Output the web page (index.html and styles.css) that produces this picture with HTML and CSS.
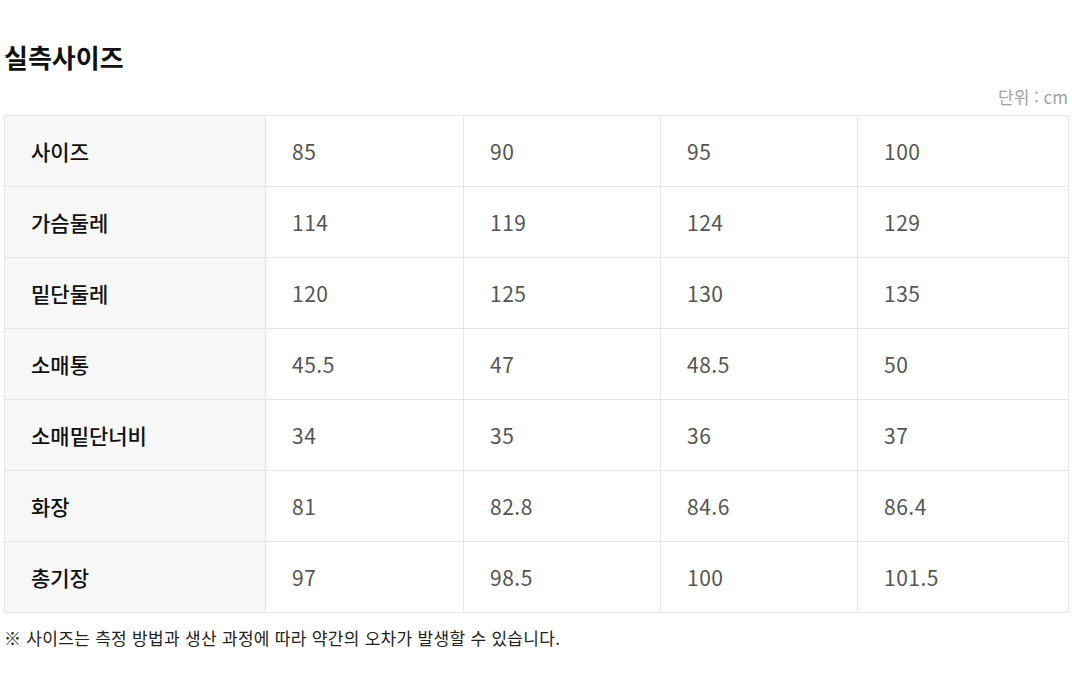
FILE: index.html
```html
<!DOCTYPE html>
<html lang="ko">
<head>
<meta charset="utf-8">
<link rel="stylesheet" href="styles.css">
</head>
<body>
<div class="page">
  <h2 class="title">실측사이즈</h2>
  <div class="unit">단위 : cm</div>
  <table class="size-table">
    <colgroup>
      <col class="c-head"><col class="c-a"><col class="c-b"><col class="c-c"><col class="c-d">
    </colgroup>
    <tbody>
      <tr><th>사이즈</th><td>85</td><td>90</td><td>95</td><td>100</td></tr>
      <tr><th>가슴둘레</th><td>114</td><td>119</td><td>124</td><td>129</td></tr>
      <tr><th>밑단둘레</th><td>120</td><td>125</td><td>130</td><td>135</td></tr>
      <tr><th>소매통</th><td>45.5</td><td>47</td><td>48.5</td><td>50</td></tr>
      <tr><th>소매밑단너비</th><td>34</td><td>35</td><td>36</td><td>37</td></tr>
      <tr><th>화장</th><td>81</td><td>82.8</td><td>84.6</td><td>86.4</td></tr>
      <tr><th>총기장</th><td>97</td><td>98.5</td><td>100</td><td>101.5</td></tr>
    </tbody>
  </table>
  <p class="note">※ 사이즈는 측정 방법과 생산 과정에 따라 약간의 오차가 발생할 수 있습니다.</p>
</div>
</body>
</html>
```

FILE: styles.css
```css
html, body {
  margin: 0;
  padding: 0;
  background: #fff;
}
body {
  font-family: "Noto Sans CJK KR", "Noto Sans", sans-serif;
  color: #111;
}
.page {
  width: 1064px;
  padding: 42px 4px 0 4px;
}
.title {
  margin: 0;
  font-size: 26px;
  line-height: 30px;
  font-weight: 700;
  color: #111;
}
.unit {
  margin-top: 15px;
  text-align: right;
  font-size: 17px;
  line-height: 20px;
  color: #a0a0a0;
}
.size-table {
  margin-top: 8px;
  width: 1064px;
  border-collapse: collapse;
  table-layout: fixed;
}
.c-head { width: 261px; }
.c-a { width: 198px; }
.c-b { width: 197px; }
.c-c { width: 197px; }
.c-d { width: 211px; }
.size-table th,
.size-table td {
  border: 1px solid #e6e6e6;
  height: 70px;
  padding: 0 0 0 26px;
  text-align: left;
  font-size: 21px;
  line-height: 24px;
  vertical-align: middle;
}
.size-table th {
  background: #f7f7f7;
  font-weight: 500;
  color: #111;
}
.size-table td {
  color: #555;
  font-weight: 400;
  letter-spacing: 0.5px;
}
.note {
  margin: 15px 0 0 0;
  font-size: 17px;
  line-height: 20px;
  letter-spacing: 0.3px;
  color: #222;
}
```
